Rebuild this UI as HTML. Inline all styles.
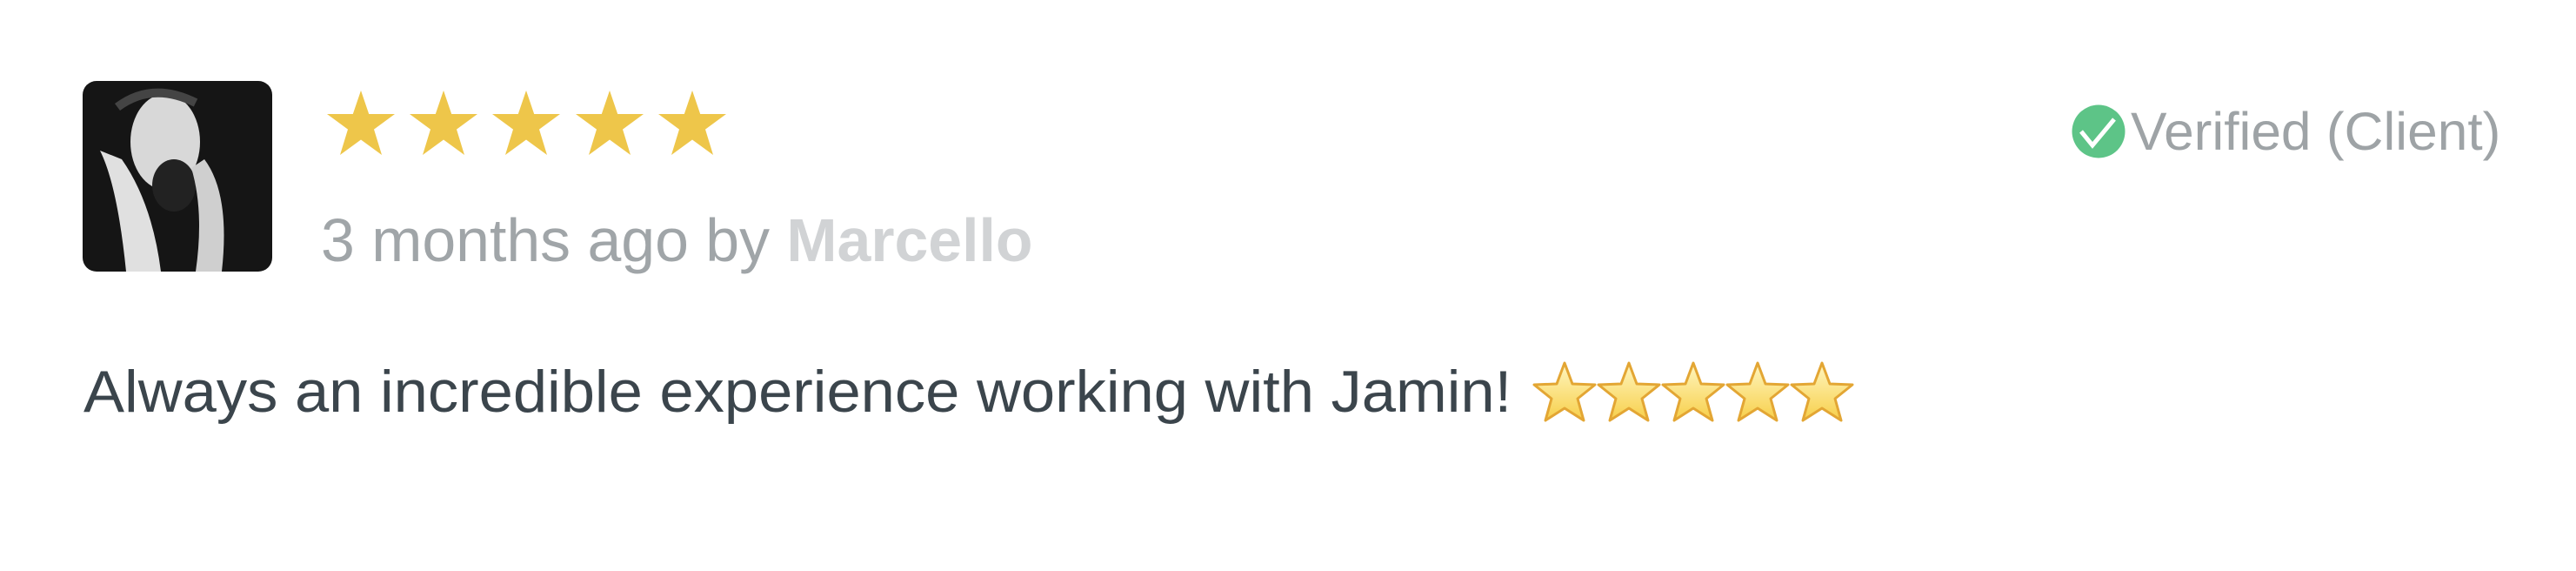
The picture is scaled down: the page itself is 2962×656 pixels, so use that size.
<!DOCTYPE html>
<html><head><style>
html,body{margin:0;padding:0;background:#fff;}
body{width:2962px;height:656px;position:relative;overflow:hidden;font-family:"Liberation Sans",sans-serif;}
.abs{position:absolute;white-space:nowrap;}
</style></head><body>
<svg class="abs" style="left:95px;top:93px" width="218" height="219" viewBox="0 0 218 219">
<defs><clipPath id="c"><rect width="218" height="219" rx="16"/></clipPath></defs>
<g clip-path="url(#c)">
<rect width="218" height="219" fill="#151515"/>
<ellipse cx="95" cy="70" rx="40" ry="55" fill="#d8d8d8"/>
<ellipse cx="105" cy="120" rx="25" ry="30" fill="#222"/>
<path d="M20 80 Q40 120 50 219 L90 219 Q80 140 45 90 Z" fill="#e0e0e0"/>
<path d="M140 90 Q170 130 160 219 L130 219 Q140 150 125 100 Z" fill="#cfcfcf"/>
<path d="M40 30 Q80 0 130 25" stroke="#444" stroke-width="10" fill="none"/>
</g></svg>
<svg class="abs" style="left:376px;top:104px" width="470" height="76" viewBox="0 0 470 76">
<defs><polygon id="s" points="39,0 48.2,27 78,27 54,44.6 63,74 39,56.5 15,74 24,44.6 0,27 29.8,27"/></defs>
<g fill="#eec64a"><use href="#s" x="0"/><use href="#s" x="95"/><use href="#s" x="190"/><use href="#s" x="286"/><use href="#s" x="381"/></g>
</svg>
<div class="abs" style="left:369px;top:236px;font-size:70px;line-height:80px;color:#a0a5a8;transform:scaleX(0.997);transform-origin:left">3 months ago by <b style="color:#d1d3d5">Marcello</b></div>
<div class="abs" style="left:96px;top:410px;font-size:68px;line-height:80px;color:#3b454c;transform:scaleX(1.037);transform-origin:left">Always an incredible experience working with Jamin!</div>
<svg class="abs" style="left:1762px;top:414px" width="372" height="72" viewBox="0 0 372 72">
<defs><linearGradient id="y" x1="0" y1="0" x2="0" y2="1"><stop offset="0" stop-color="#fff6c0"/><stop offset="1" stop-color="#f7cf4a"/></linearGradient>
<polygon id="e" points="37,3 46,27 72,28 52,44 59,69 37,55 15,69 22,44 2,28 28,27" fill="url(#y)" stroke="#e3a634" stroke-width="3" stroke-linejoin="round"/></defs>
<use href="#e" x="0"/><use href="#e" x="74"/><use href="#e" x="148"/><use href="#e" x="222"/><use href="#e" x="296"/>
</svg>
<svg class="abs" style="left:2382px;top:120px" width="62" height="62" viewBox="0 0 62 62">
<circle cx="31" cy="31" r="30.5" fill="#5dc487"/>
<path d="M11 31 L24 47 L49 17" stroke="#fff" stroke-width="5" fill="none"/>
</svg>
<div class="abs" style="left:2450px;top:115px;font-size:61px;line-height:72px;color:#9ea3a6;transform:scaleX(1.02);transform-origin:left">Verified (Client)</div>
</body></html>
